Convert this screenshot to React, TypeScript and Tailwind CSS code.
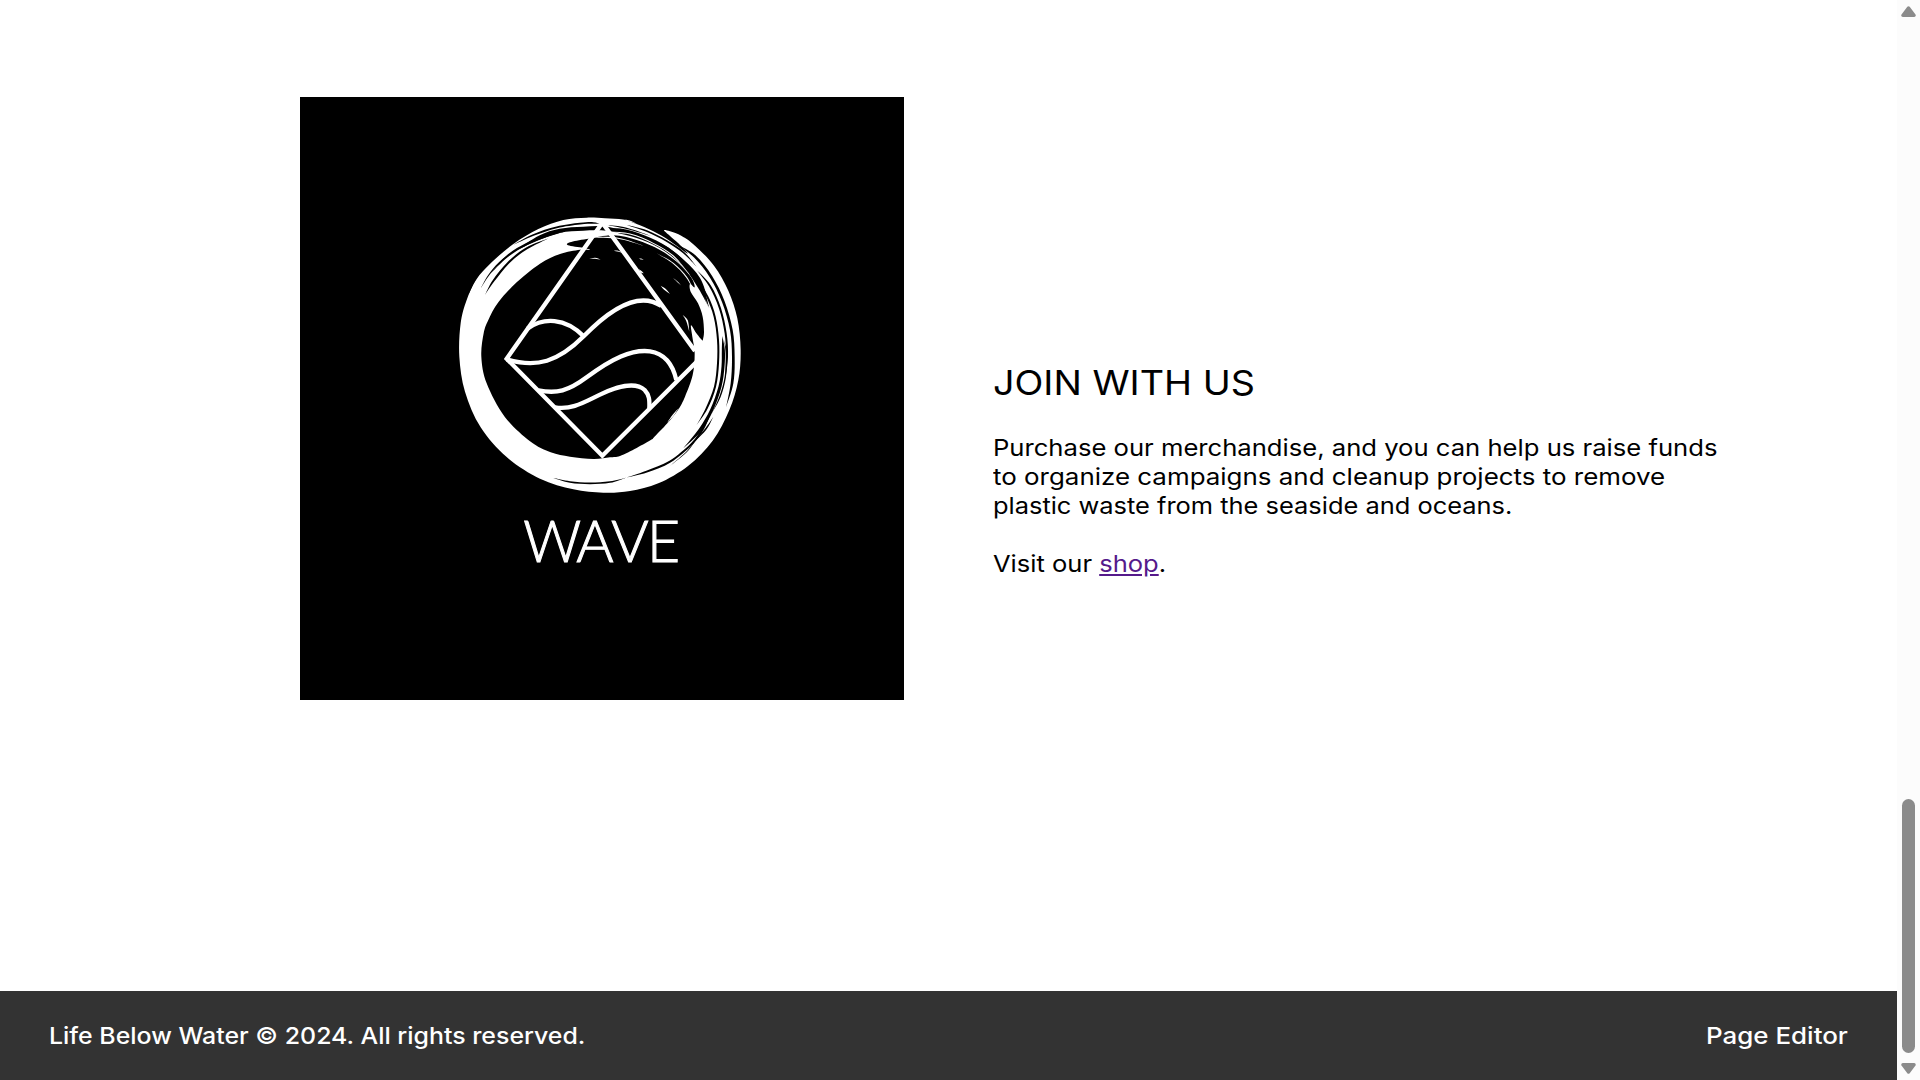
type Point = [number, number];

/* Smooth curve through a list of points (Catmull-Rom converted to Bezier). */
function curve(points: Point[], closed = false): string {
  const n = points.length;
  const at = (i: number) =>
    closed ? points[(i + n) % n] : points[Math.max(0, Math.min(n - 1, i))];
  let d = `M${points[0][0]},${points[0][1]}`;
  const segments = closed ? n : n - 1;
  for (let i = 0; i < segments; i++) {
    const [a, b, c, e] = [at(i - 1), at(i), at(i + 1), at(i + 2)];
    d += `C${b[0] + (c[0] - a[0]) / 6},${b[1] + (c[1] - a[1]) / 6} ${c[0] - (e[0] - b[0]) / 6},${c[1] - (e[1] - b[1]) / 6} ${c[0]},${c[1]}`;
  }
  return closed ? d + "Z" : d;
}

/* Brush hair: a curve that is thickest in the middle and pointed at both ends. */
function hair(points: Point[], width: number): string {
  const n = points.length;
  const left: Point[] = [];
  const right: Point[] = [];
  points.forEach(([x, y], i) => {
    const p = points[Math.max(0, i - 1)];
    const q = points[Math.min(n - 1, i + 1)];
    const len = Math.hypot(q[0] - p[0], q[1] - p[1]) || 1;
    const w = i === 0 || i === n - 1 ? 0 : width / 2;
    const nx = (-(q[1] - p[1]) / len) * w;
    const ny = ((q[0] - p[0]) / len) * w;
    left.push([x + nx, y + ny]);
    right.unshift([x - nx, y - ny]);
  });
  return curve(left) + curve(right).replace("M", "L") + "Z";
}

const ringOuter: Point[] = [
  [440, 53], [495, 55], [550, 59], [590, 72], [640, 94], [690, 123], [735, 156], [742, 158],
  [715, 130], [690, 108], [672, 91], [690, 94], [725, 108], [765, 137], [822, 197], [865, 272], [892, 355], [902, 450],
  [895, 540], [868, 630], [818, 722], [745, 797], [655, 850], [570, 873], [490, 878],
  [400, 868], [300, 836], [200, 771], [122, 682], [75, 575], [58, 470], [62, 370],
  [80, 300], [108, 240], [155, 187], [220, 132], [295, 87], [370, 60],
];

const ringInner: Point[] = [
  [460, 777], [390, 770], [332, 757], [270, 724], [194, 650], [140, 550], [124, 470],
  [131, 400], [144, 362], [175, 307], [230, 247], [300, 191], [360, 162], [420, 149],
  [450, 150], [430, 144], [384, 136], [390, 127], [440, 117], [520, 106], [590, 120], [660, 150], [718, 192],
  [755, 235], [764, 262], [750, 252], [752, 275], [774, 310], [788, 350], [792, 395], [789, 418], [786, 420], [768, 398], [753, 376],
  [757, 410], [764, 460], [758, 525], [735, 590], [714, 630], [682, 670], [640, 714], [636, 718],
  [590, 744], [540, 768], [510, 772],
];

const darkHairs: [Point[], number][] = [
  [[[215, 137], [280, 105], [350, 82], [420, 71], [460, 69], [482, 72]], 5],
  [[[500, 75], [560, 85], [640, 110]], 4],
  [[[230, 150], [300, 112], [360, 92], [430, 86], [500, 86], [570, 100]], 12],
  [[[150, 222], [200, 170], [260, 132], [320, 108], [372, 95]], 6],
  [[[135, 285], [160, 243], [205, 188], [260, 145], [330, 113]], 6],
  [[[122, 265], [150, 220], [190, 177], [245, 140]], 3],
  [[[480, 87], [540, 93], [610, 113], [680, 148], [740, 201], [782, 262], [808, 325]], 15],
  [[[600, 112], [670, 140], [730, 185], [775, 235], [800, 285]], 10],
  [[[560, 75], [620, 93], [680, 123], [730, 157], [770, 200]], 5],
  [[[715, 135], [765, 170], [813, 230], [850, 305], [874, 390], [880, 470], [876, 550], [858, 622]], 8],
  [[[770, 210], [810, 258], [840, 325], [857, 400], [861, 470], [856, 540]], 6],
  [[[770, 235], [802, 290], [824, 350], [834, 420], [834, 490], [825, 560], [800, 625], [770, 675]], 6],
  [[[847, 408], [850, 450], [849, 500], [840, 560], [815, 630], [780, 690], [730, 745]], 9],
  [[[852, 420], [859, 460], [856, 530], [840, 590], [815, 640]], 4],
  [[[812, 640], [790, 685], [755, 732], [690, 785], [620, 815], [555, 834]], 6],
  [[[820, 650], [795, 690], [750, 738]], 5],
  [[[780, 700], [745, 750], [690, 798]], 2],
  [[[340, 834], [390, 846], [450, 850], [510, 846], [558, 833]], 5],
  [[[85, 285], [96, 258], [112, 232]], 2],
];

const lightHairs: [Point[], number][] = [
  [[[440, 115], [490, 112], [545, 117], [610, 137]], 3],
  [[[440, 103], [490, 97], [570, 102], [640, 130], [700, 168], [750, 225]], 3],
  [[[650, 160], [700, 190], [740, 232], [765, 280]], 3],
  [[[448, 177], [465, 175], [482, 179]], 3],
  [[[518, 152], [532, 153], [548, 158]], 3],
  [[[595, 177], [603, 177], [611, 180]], 3],
  [[[597, 208], [603, 215], [611, 220]], 5],
  [[[662, 257], [675, 268], [690, 282]], 5],
  [[[700, 235], [712, 245], [724, 257]], 2],
  [[[728, 345], [741, 362], [748, 395]], 5],
  [[[792, 290], [812, 340], [822, 400]], 2],
  [[[682, 668], [700, 645], [716, 625]], 4],
  [[[535, 60], [565, 62], [592, 72]], 3],
];

function WaveLogo() {
  return (
    <svg viewBox="-420 -309 1812 1809" className="h-[603px] w-[604px] shrink-0 bg-black">
      <path d={curve(ringOuter, true)} fill="#fff" />
      <path d={curve(ringInner, true)} fill="#000" />
      {darkHairs.map(([points, width], i) => (
        <path key={i} d={hair(points, width)} fill="#000" />
      ))}
      {lightHairs.map(([points, width], i) => (
        <path key={i} d={hair(points, width)} fill="#fff" />
      ))}
      <g fill="none" stroke="#fff" strokeWidth="13">
        <path d="M765,453 L487,68 L200,476 L487,767 L770,485" />
        <path d="M262,386 C310,352 375,352 431,409" />
        <path d="M200,478 C290,505 355,485 431,409 C500,338 590,268 664,318" />
        <path d="M295,571 C350,582 385,573 440,532 C515,476 575,447 630,454 C680,462 700,500 709,540" />
        <path d="M345,622 C395,630 430,608 480,584 C540,555 590,548 614,570 C628,585 629,600 628,625" />
      </g>
      <text
        x="250 409 514 621"
        y="1086"
        fill="#fff"
        stroke="#fff"
        strokeWidth="3"
        fontFamily="Lato, sans-serif"
        fontWeight="300"
        fontSize="171"
      >
        WAVE
      </text>
    </svg>
  );
}

function Scrollbar() {
  return (
    <div className="flex w-[23px] shrink-0 flex-col items-center bg-[#fcfcfc]">
      <svg viewBox="0 0 15 11" className="mt-[6px] h-[11px] w-[15px]" fill="#8b8b8b">
        <path d="M6.3,0.8 Q7.5,-0.4 8.7,0.8 L14.5,8.6 Q15.3,10.6 13.2,11 H1.8 Q-0.3,10.6 0.5,8.6 Z" />
      </svg>
      <div className="mt-[782px] h-[254px] w-[13px] rounded-full bg-[#8b8b8b]" />
      <svg viewBox="0 0 15 11" className="mt-[10px] h-[11px] w-[15px]" fill="#8b8b8b">
        <path d="M6.3,10.2 Q7.5,11.4 8.7,10.2 L14.5,2.4 Q15.3,0.4 13.2,0 H1.8 Q-0.3,0.4 0.5,2.4 Z" />
      </svg>
    </div>
  );
}

export default function App() {
  return (
    <div className="flex h-[1080px] w-[1920px] overflow-hidden bg-white font-['Inter',sans-serif] text-[23px] leading-[29px] text-black">
      <div className="flex min-w-0 flex-1 flex-col">
        <main className="flex h-[991px] items-start pt-[97px] pl-[300px]">
          <WaveLogo />
          <section className="ml-[89px] pt-[263px] whitespace-nowrap">
            <h1 className="w-fit origin-left scale-x-[1.09] text-[34.6px] leading-[44px] font-normal">
              JOIN WITH US
            </h1>
            <p className="mt-[30px]">
              <span className="block w-fit origin-left scale-x-[1.114]">
                Purchase our merchandise, and you can help us raise funds
              </span>
              <span className="block w-fit origin-left scale-x-[1.127]">
                to organize campaigns and cleanup projects to remove
              </span>
              <span className="block w-fit origin-left scale-x-[1.105]">
                plastic waste from the seaside and oceans.
              </span>
            </p>
            <p className="mt-[29px] w-fit origin-left scale-x-[1.11]">
              Visit our{" "}
              <a href="#shop" className="text-[#551a8b] underline">
                shop
              </a>
              .
            </p>
          </section>
        </main>
        <footer className="flex h-[89px] items-center justify-between bg-[#333] px-[49px] pt-[2px] font-medium text-white">
          <span className="origin-left scale-x-[1.082]">Life Below Water © 2024. All rights reserved.</span>
          <span className="origin-right scale-x-[1.127]">Page Editor</span>
        </footer>
      </div>
      <Scrollbar />
    </div>
  );
}
